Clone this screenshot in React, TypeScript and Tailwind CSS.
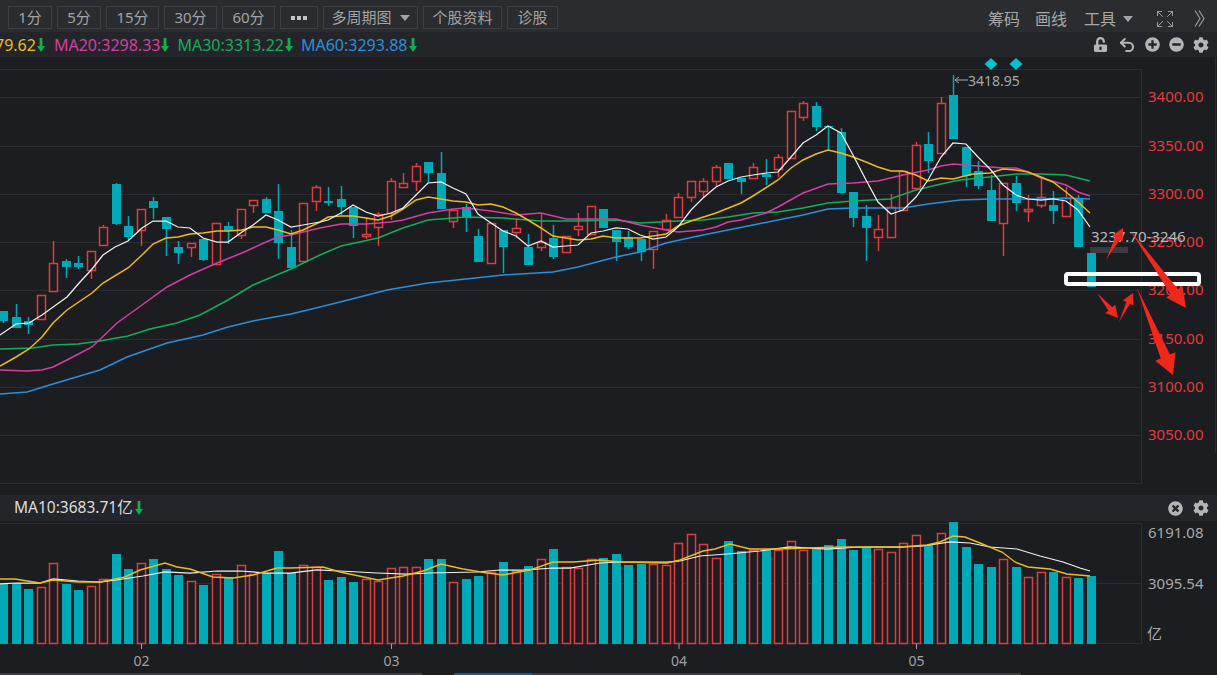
import React from "react";
import { FaCog, FaMinusCircle, FaPlusCircle, FaTimesCircle, FaUnlockAlt } from "react-icons/fa";
import { Expand, Undo2 } from "lucide-react";

const TEAL = "#00a9b7";
const RED = "#de3d40";
const BG = "#1c1d21";
const GRID = "#2c2d31";

// red(1)/teal(0), body top, body bottom, wick top, wick bottom (page pixels)
const candles: number[][] = [
  [0, 311, 321, 311, 323], [0, 317, 328, 304, 328], [0, 321, 325, 317, 334], [1, 295, 319, 295, 320],
  [1, 263, 291, 241, 291], [0, 261, 267, 259, 278], [0, 263, 267, 256, 269], [1, 251, 270, 251, 279],
  [1, 227, 245, 225, 245], [0, 184, 224, 183, 225], [0, 226, 237, 216, 240], [1, 209, 230, 209, 246],
  [0, 201, 208, 197, 219], [0, 217, 229, 217, 256], [0, 247, 253, 241, 264], [1, 243, 247, 243, 257],
  [0, 239, 260, 239, 261], [1, 223, 264, 223, 264], [0, 226, 231, 222, 244], [1, 209, 235, 209, 239],
  [1, 200, 205, 200, 213], [0, 199, 213, 197, 213], [0, 211, 243, 184, 259], [0, 247, 268, 230, 268],
  [1, 203, 261, 203, 261], [1, 187, 201, 185, 211], [0, 201, 203, 187, 206], [0, 199, 207, 186, 215],
  [0, 207, 226, 207, 238], [1, 234, 236, 217, 239], [1, 214, 227, 212, 246], [1, 181, 213, 178, 220],
  [1, 183, 187, 173, 187], [1, 166, 181, 163, 191], [0, 162, 173, 162, 183], [0, 173, 209, 152, 209],
  [1, 210, 221, 210, 228], [0, 207, 217, 204, 232], [0, 236, 262, 229, 262], [1, 223, 263, 223, 263],
  [0, 230, 247, 230, 273], [1, 228, 232, 219, 238], [0, 247, 265, 234, 265], [1, 242, 247, 213, 251],
  [0, 238, 257, 225, 259], [1, 236, 252, 236, 253], [1, 226, 229, 213, 236], [1, 206, 234, 206, 234],
  [0, 209, 228, 209, 228], [0, 230, 242, 230, 261], [0, 237, 247, 231, 249], [0, 239, 252, 239, 261],
  [1, 231, 249, 231, 269], [1, 220, 229, 214, 229], [1, 197, 217, 193, 217], [1, 181, 197, 181, 202],
  [1, 181, 191, 178, 197], [1, 167, 181, 165, 186], [0, 163, 179, 163, 179], [0, 178, 182, 178, 194],
  [1, 167, 178, 163, 179], [0, 174, 177, 159, 185], [1, 157, 169, 154, 177], [1, 111, 158, 111, 158],
  [1, 103, 117, 101, 121], [0, 106, 127, 102, 131], [0, 126, 127, 126, 150], [0, 132, 193, 128, 193],
  [0, 192, 218, 192, 227], [0, 216, 228, 205, 261], [1, 229, 237, 215, 251], [1, 207, 237, 194, 237],
  [1, 171, 210, 171, 210], [1, 145, 188, 142, 190], [0, 144, 161, 132, 173], [1, 103, 153, 97, 153],
  [0, 95, 139, 75, 139], [0, 147, 176, 147, 187], [0, 171, 186, 161, 189], [0, 190, 221, 175, 221],
  [1, 183, 223, 183, 256], [0, 183, 203, 176, 211], [1, 209, 211, 195, 222], [1, 197, 205, 178, 208],
  [0, 205, 211, 191, 224], [1, 198, 216, 187, 216], [0, 198, 247, 195, 247], [0, 253, 287, 253, 287],
];

const volumes = [
  584, 583, 589, 587, 563, 584, 590, 586, 579, 554, 569, 563, 559, 569, 575, 581, 585, 574, 577, 565, 574, 573,
  551, 573, 565, 567, 580, 577, 582, 579, 581, 568, 567, 567, 559, 559, 582, 579, 576, 572, 562, 571, 566, 559,
  549, 567, 568, 559, 558, 554, 565, 564, 564, 565, 543, 534, 544, 558, 541, 551, 550, 550, 550, 541, 550, 549,
  545, 539, 550, 548, 549, 552, 543, 535, 545, 533, 522, 547, 564, 567, 559, 567, 577, 572, 572, 577, 578, 576,
];

const maWhite = "0,335 16,324 29,323 42,315 67,297 80,282 92,269 103,255 115,247 128,241 142,228 153,221 166,221 178,227 190,228 203,238 217,242 228,242 242,232 253,225 266,215 278,220 291,227 303,225 320,222 328,220 341,213 353,205 366,212 378,216 391,213 403,208 416,195 428,183 441,182 453,188 466,194 478,214 491,223 503,231 516,236 528,246 541,241 553,247 566,246 578,245 591,233 603,231 616,228 628,229 640,235 653,239 666,237 678,227 691,210 703,198 716,187 728,181 741,177 753,175 766,173 778,172 791,157 803,143 816,135 828,126 841,133 853,155 866,180 878,202 891,214 903,210 916,197 928,180 941,157 953,143 966,144 978,157 991,170 1003,185 1016,195 1028,199 1041,200 1053,199 1066,201 1078,210 1090,227";
const maYellow = "0,366 16,357 29,349 42,337 53,323 67,310 92,293 103,283 128,268 142,255 153,244 166,238 178,237 190,234 203,233 217,231 228,231 242,230 253,227 266,227 278,230 291,234 303,230 320,222 328,217 341,216 353,216 366,218 378,220 391,216 403,209 416,200 428,197 441,199 453,201 466,202 478,205 491,204 503,207 516,213 528,220 541,228 553,236 566,238 578,240 591,239 603,236 616,238 628,238 640,238 653,236 666,234 678,226 691,221 716,213 741,203 753,196 778,180 791,168 803,160 816,154 828,150 841,153 853,157 866,162 878,167 891,171 903,171 916,175 928,181 941,178 953,179 973,174 990,173 1003,169 1016,170 1028,172 1041,177 1053,182 1066,192 1078,202 1090,213";
const maPink = "0,370 27,371 42,370 53,367 67,360 92,347 117,323 142,305 167,287 190,275 217,263 242,253 266,242 278,237 291,235 303,232 320,228 341,224 366,224 391,222 403,220 428,213 453,209 466,208 491,211 516,215 541,213 566,219 591,219 616,219 640,225 666,230 678,232 703,230 716,227 728,222 741,220 766,213 778,207 803,193 828,184 853,183 878,181 903,175 928,170 941,166 953,164 978,166 1003,168 1016,168 1028,172 1041,178 1066,185 1078,192 1090,196";
const maGreen = "0,349 33,348 53,345 78,344 100,341 128,336 150,329 177,323 200,315 228,300 253,285 291,269 320,255 341,246 378,238 403,228 428,220 466,217 503,218 541,221 578,221 616,220 640,223 678,221 703,220 728,217 753,213 778,212 803,208 828,203 853,201 890,199 916,190 941,184 960,180 990,177 1016,174 1041,174 1066,175 1078,178 1090,181";
const maBlue = "0,394 27,392 53,384 100,370 127,357 167,343 203,335 228,327 253,321 291,314 320,307 348,300 387,290 428,283 466,279 503,275 553,272 578,267 616,257 640,252 666,243 703,235 753,225 803,215 828,209 853,208 903,208 928,204 960,200 990,199 1041,199 1066,198 1090,199";
const volWhite = "0,584 17,583 40,583 53,579 78,581 100,582 123,579 143,576 165,572 190,573 217,571 240,571 267,573 290,573 317,570 340,571 377,573 407,574 430,573 477,572 500,570 523,570 553,568 570,568 600,563 620,562 667,562 680,561 700,556 727,554 760,551 790,547 827,549 860,547 900,547 923,546 950,542 970,543 990,547 1017,549 1040,556 1063,562 1080,568 1090,571";
const volYellow = "0,579 15,579 40,583 53,580 78,582 100,582 125,577 140,570 165,563 177,567 190,569 213,577 233,578 253,575 277,568 290,568 323,567 340,572 378,580 403,576 423,571 441,564 463,569 487,573 503,575 530,570 553,562 573,562 600,560 620,562 667,563 680,560 703,551 715,549 730,544 750,549 780,549 807,548 840,547 880,547 900,547 927,545 940,542 953,536 965,537 980,543 1002,552 1015,562 1028,567 1050,569 1067,574 1090,576";

const priceLabels = [
  { y: 97, t: "3400.00" }, { y: 146, t: "3350.00" }, { y: 194, t: "3300.00" }, { y: 242, t: "3250.00" },
  { y: 290, t: "3200.00" }, { y: 339, t: "3150.00" }, { y: 387, t: "3100.00" }, { y: 435, t: "3050.00" },
];

const centerX = (i: number) => Math.floor(3.5 + 12.5 * i) + 0.5;

// hand drawn red arrow, tail is a point and it widens towards the head
const arrow = (x1: number, y1: number, x2: number, y2: number, w: number, hw: number, hl: number) => {
  const len = Math.hypot(x2 - x1, y2 - y1);
  const ux = (x2 - x1) / len;
  const uy = (y2 - y1) / len;
  const bx = x2 - ux * hl;
  const by = y2 - uy * hl;
  const p = (d: number) => `${bx - uy * d},${by + ux * d}`;
  return [`${x1},${y1}`, p(w), p(hw), `${x2},${y2}`, p(-hw), p(-w)].join(" ");
};

const DownArrow = () => (
  <svg width="8" height="14" viewBox="0 0 8 14" className="shrink-0">
    <path d="M2.6 0h2.8v8H8l-4 6-4-6h2.6z" fill="#10b04a" />
  </svg>
);

const ToolButton = ({ label, w, children }: { label?: string; w: string; children?: React.ReactNode }) => (
  <div className={`h-[23px] ${w} flex items-center justify-center gap-2 border border-[#3e3f44] text-[15px] text-[#a3a3a3]`}>
    {label}
    {children}
  </div>
);

const Caret = () => <div className="w-0 h-0 border-l-[5px] border-r-[5px] border-t-[6px] border-l-transparent border-r-transparent border-t-[#a3a3a3]" />;

const MaLegend = ({ text, color }: { text: string; color: string }) => (
  <span className="flex items-center gap-[1px]" style={{ color }}>
    {text}
    <DownArrow />
  </span>
);

const App = () => {
  return (
    <div className="w-[1217px] h-[675px] overflow-hidden flex flex-col bg-[#1c1d21] font-['Noto_Sans','Noto_Sans_CJK_SC',sans-serif]">
      {/* toolbar */}
      <div className="h-[32px] flex items-center bg-[#2b2c30] pr-[12px]">
        <div className="flex items-center gap-[5px] pl-[8px] pt-[3px]">
          <ToolButton label="1分" w="w-[44px]" />
          <ToolButton label="5分" w="w-[44px]" />
          <ToolButton label="15分" w="w-[53px]" />
          <ToolButton label="30分" w="w-[53px]" />
          <ToolButton label="60分" w="w-[53px]" />
          <ToolButton w="w-[38px]">
            <div className="flex gap-[2px]">
              <div className="w-[4px] h-[4px] bg-[#c4c4c4]" />
              <div className="w-[4px] h-[4px] bg-[#c4c4c4]" />
              <div className="w-[4px] h-[4px] bg-[#c4c4c4]" />
            </div>
          </ToolButton>
          <ToolButton label="多周期图" w="w-[95px]">
            <Caret />
          </ToolButton>
          <ToolButton label="个股资料" w="w-[79px]" />
          <ToolButton label="诊股" w="w-[51px]" />
        </div>
        <div className="ml-auto flex items-center text-[16px] text-[#a8a8a8] pt-[5px]">
          <span>筹码</span>
          <span className="ml-[15px]">画线</span>
          <span className="ml-[17px]">工具</span>
          <span className="ml-[7px]">
            <Caret />
          </span>
          <Expand size={20} strokeWidth={1.2} className="ml-[22px] text-[#9a9a9a]" />
          <svg width="11" height="17" viewBox="0 0 11 17" fill="none" stroke="#9a9a9a" strokeWidth="1.2" className="ml-[19px]">
            <path d="M1 .5l5 8-5 8M5 .5l5 8-5 8" />
          </svg>
        </div>
      </div>

      {/* MA legend */}
      <div className="h-[25px] flex items-center bg-[#24252a] text-[16px] pr-[8px]">
        <span className="ml-[-5px]">
          <MaLegend text="79.62" color="#ecba22" />
        </span>
        <span className="ml-[9px]">
          <MaLegend text="MA20:3298.33" color="#d63da2" />
        </span>
        <span className="ml-[8px]">
          <MaLegend text="MA30:3313.22" color="#14ad5c" />
        </span>
        <span className="ml-[8px]">
          <MaLegend text="MA60:3293.88" color="#2a8fdc" />
        </span>
        <div className="ml-auto flex items-center gap-[9px] text-[#b5b5b5]">
          <FaUnlockAlt size={15} className="mr-[1px]" />
          <Undo2 size={18} strokeWidth={2.8} />
          <FaPlusCircle size={15} />
          <FaMinusCircle size={15} />
          <FaCog size={16} />
        </div>
      </div>

      {/* price chart */}
      <svg viewBox="0 57 1217 438" className="w-[1217px] h-[438px] block shrink-0">
        <line x1="0" x2="1141" y1="69.5" y2="69.5" stroke={GRID} />
        {priceLabels.map((l) => (
          <line key={l.y} x1="0" x2="1141" y1={l.y + 0.5} y2={l.y + 0.5} stroke={GRID} />
        ))}
        <line x1="0" x2="1141" y1="483.5" y2="483.5" stroke={GRID} />
        <line x1="1141.5" x2="1141.5" y1="69" y2="484" stroke={GRID} />
        <line x1="1215.5" x2="1215.5" y1="57" y2="453" stroke={GRID} />
        {candles.map(([red, top, bot, wt, wb], i) => {
          const cx = centerX(i);
          return (
            <g key={i}>
              <line x1={cx} x2={cx} y1={wt} y2={wb} stroke={red ? RED : TEAL} strokeWidth="1.5" />
              {red ? (
                <rect x={cx - 4} y={top + 0.5} width="8" height={bot - top} fill={BG} stroke={RED} strokeWidth="1.5" />
              ) : (
                <rect x={cx - 4.5} y={top} width="9" height={bot - top} fill={TEAL} />
              )}
            </g>
          );
        })}
        <polyline points={maBlue} fill="none" stroke="#2a8fdc" strokeWidth="1.5" />
        <polyline points={maGreen} fill="none" stroke="#14ad5c" strokeWidth="1.5" />
        <polyline points={maPink} fill="none" stroke="#d63da2" strokeWidth="1.5" />
        <polyline points={maYellow} fill="none" stroke="#ecba22" strokeWidth="1.5" />
        <polyline points={maWhite} fill="none" stroke="#f0f0f0" strokeWidth="1.25" />
        {priceLabels.map((l) => (
          <text key={l.t} x="1148" y={l.y + 5} fontSize="15" fill="#e23b3b">
            {l.t}
          </text>
        ))}
        {/* signal markers */}
        <polygon points="991,58 997.5,64 991,70 984.5,64" fill="#00c3d2" />
        <polygon points="1016,58 1022.5,64 1016,70 1009.5,64" fill="#00c3d2" />
        <path d="M955 80h13M955 80l4-3M955 80l4 3" stroke="#a8a8a8" fill="none" />
        <text x="968" y="86" fontSize="14" fill="#a8a8a8">
          3418.95
        </text>
        {/* hand annotations */}
        <text x="1091" y="242" fontSize="15" fill="#b9b9b9">
          3237.70-3246
        </text>
        <rect x="1090" y="247" width="38" height="6" fill="#3a3b40" />
        <rect x="1066" y="274" width="133" height="10" rx="2" fill="none" stroke="#ffffff" strokeWidth="4" />
        <polygon points={arrow(1106, 260, 1123, 228, 2.5, 6, 12)} fill="#f0281c" />
        <polygon points={arrow(1130, 230, 1186, 308, 4.5, 10, 20)} fill="#f0281c" />
        <polygon points={arrow(1097, 293, 1118, 318, 2.5, 6.5, 12)} fill="#f0281c" />
        <polygon points={arrow(1119, 322, 1133, 293, 2, 6, 11)} fill="#f0281c" />
        <polygon points={arrow(1137, 288, 1173, 375, 5, 11, 20)} fill="#f0281c" />
      </svg>

      {/* volume legend */}
      <div className="h-[26px] flex items-center bg-[#24252a] text-[15.5px] text-[#dcdcdc] pl-[14px] pr-[8px]">
        <span className="flex items-center gap-[2px]">
          MA10:3683.71亿
          <DownArrow />
        </span>
        <div className="ml-auto flex items-center gap-[10px] text-[#b5b5b5]">
          <FaTimesCircle size={15} />
          <FaCog size={16} />
        </div>
      </div>

      {/* volume chart */}
      <svg viewBox="0 521 1217 152" className="w-[1217px] h-[152px] block shrink-0">
        <rect x="-1" y="523.5" width="1142.5" height="120" fill="none" stroke={GRID} />
        <line x1="0" x2="1141" y1="583.5" y2="583.5" stroke={GRID} />
        {volumes.map((top, i) => {
          const cx = centerX(i);
          return candles[i][0] ? (
            <rect key={i} x={cx - 4} y={top + 0.5} width="8" height={643 - top} fill={BG} stroke={RED} strokeWidth="1.5" />
          ) : (
            <rect key={i} x={cx - 4.5} y={top} width="9" height={644 - top} fill={TEAL} />
          );
        })}
        <polyline points={volWhite} fill="none" stroke="#f0f0f0" strokeWidth="1.25" />
        <polyline points={volYellow} fill="none" stroke="#ecba22" strokeWidth="1.4" />
        {[
          { x: 141.5, t: "02" },
          { x: 391.5, t: "03" },
          { x: 679, t: "04" },
          { x: 916.5, t: "05" },
        ].map((d) => (
          <g key={d.t}>
            <line x1={d.x} x2={d.x} y1="644" y2="649" stroke="#a0a0a0" />
            <text x={d.x} y="666" fontSize="14" fill="#a0a0a0" textAnchor="middle">
              {d.t}
            </text>
          </g>
        ))}
        <text x="1148" y="538" fontSize="15" fill="#a8a8a8">
          6191.08
        </text>
        <text x="1148" y="589" fontSize="15" fill="#a8a8a8">
          3095.54
        </text>
        <text x="1147" y="639" fontSize="15" fill="#a8a8a8">
          亿
        </text>
      </svg>

      {/* tab strip edge */}
      <div className="h-[2px] flex">
        <div className="w-[422px] bg-[#3a3b40]" />
        <div className="w-[32px]" />
        <div className="w-[78px] bg-[#1d5a8a]" />
        <div className="w-[489px] bg-[#3a3b40]" />
      </div>
    </div>
  );
};

export default App;
